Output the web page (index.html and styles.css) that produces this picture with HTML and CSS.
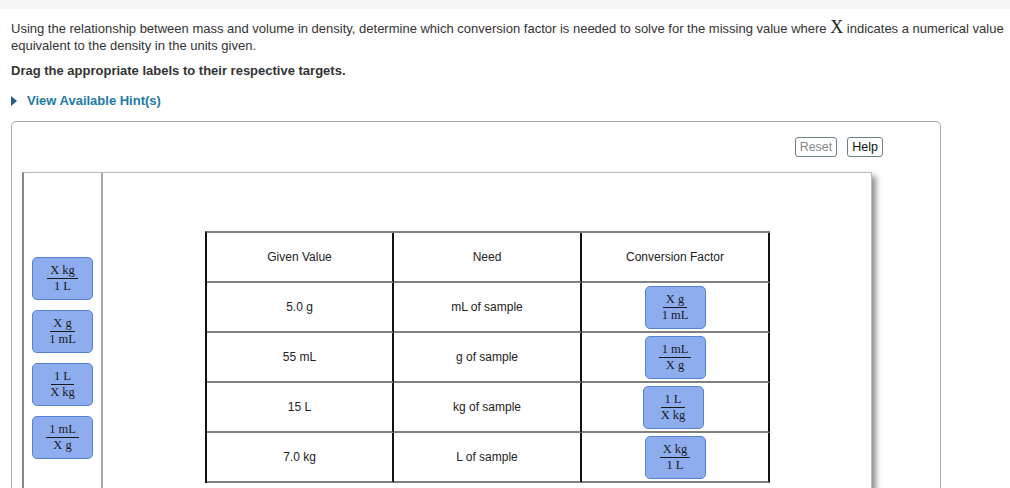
FILE: index.html
```html
<!DOCTYPE html>
<html lang="en">
<head>
    <meta charset="UTF-8">
    <meta name="viewport" content="width=device-width, initial-scale=1.0">
    <title>Density conversion factors</title>
    <link rel="stylesheet" href="styles.css">
</head>
<body>

<div class="topbar"></div>

<div class="content">
    <p class="intro">Using the relationship between mass and volume in density, determine which conversion factor is needed to solve for the missing value where <span class="math">X</span> indicates a numerical value<br>equivalent to the density in the units given.</p>
    <p class="instr">Drag the appropriate labels to their respective targets.</p>
    <div class="hint"><span class="arrow"></span>View Available Hint(s)</div>

    <div class="panel">
        <div class="toolbar">
            <button class="btn btn-off">Reset</button>
            <button class="btn">Help</button>
        </div>

        <div class="canvas">
            <!-- Labels that can be dragged -->
            <div class="labels">
                <div class="label"><span class="num">X kg</span><span class="den">1 L</span></div>
                <div class="label"><span class="num">X g</span><span class="den">1 mL</span></div>
                <div class="label"><span class="num">1 L</span><span class="den">X kg</span></div>
                <div class="label"><span class="num">1 mL</span><span class="den">X g</span></div>
            </div>

            <!-- Target table -->
            <div class="board">
                <table class="grid">
                    <tr>
                        <td>Given Value</td>
                        <td>Need</td>
                        <td>Conversion Factor</td>
                    </tr>
                    <tr>
                        <td>5.0 g</td>
                        <td>mL of sample</td>
                        <td><div class="label"><span class="num">X g</span><span class="den">1 mL</span></div></td>
                    </tr>
                    <tr>
                        <td>55 mL</td>
                        <td>g of sample</td>
                        <td><div class="label"><span class="num">1 mL</span><span class="den">X g</span></div></td>
                    </tr>
                    <tr>
                        <td>15 L</td>
                        <td>kg of sample</td>
                        <td><div class="label shift"><span class="num">1 L</span><span class="den">X kg</span></div></td>
                    </tr>
                    <tr>
                        <td>7.0 kg</td>
                        <td>L of sample</td>
                        <td><div class="label"><span class="num">X kg</span><span class="den">1 L</span></div></td>
                    </tr>
                </table>
            </div>
        </div>
    </div>
</div>

</body>
</html>
```

FILE: styles.css
```css
body {
    font-family: "Liberation Sans", Arial, sans-serif;
    color: #333;
    background: white;
    margin: 0;
    overflow: hidden;
}
.topbar {
    height: 9px;
    background-color: #f6f6f6;
}
.content {
    padding: 0 0 0 11px;
}
.intro {
    font-size: 13px;
    line-height: 17px;
    margin: 11px 0 0 0;
    white-space: nowrap;
}
.math {
    font-family: "Liberation Serif", "Times New Roman", serif;
    font-size: 18px;
    line-height: 10px;
    color: #222;
}
.instr {
    font-size: 13px;
    line-height: 17px;
    font-weight: bold;
    margin: 8px 0 0 0;
}
.hint {
    display: flex;
    align-items: center;
    font-size: 13px;
    line-height: 17px;
    font-weight: bold;
    color: #1e7aa6;
    margin-top: 13px;
}
.arrow {
    width: 0;
    height: 0;
    border-top: 5px solid transparent;
    border-bottom: 5px solid transparent;
    border-left: 6px solid #1f5f86;
    margin-right: 10px;
}
.panel {
    width: 918px;
    height: 400px;
    margin-top: 12px;
    padding: 15px 0 0 10px;
    border: 1px solid #aaa;
    border-radius: 5px;
}
.toolbar {
    width: 861px;
    display: flex;
    justify-content: flex-end;
    gap: 10px;
}
.btn {
    font-family: "Liberation Sans", Arial, sans-serif;
    font-size: 12.5px;
    height: 20px;
    padding: 0 4px;
    background: white;
    color: #111;
    border: 1px solid #6f7f86;
    border-radius: 3px;
}
.btn-off {
    color: #888;
}
.canvas {
    display: flex;
    width: 847px;
    height: 360px;
    margin-top: 15px;
    border: 1px solid #bbb;
    border-left: 2px solid #888;
    box-shadow: 4px 4px 6px rgba(0, 0, 0, 0.45);
}
.labels {
    width: 77px;
    border-right: 2px solid #aaa;
    display: flex;
    flex-direction: column;
    align-items: center;
    gap: 10px;
    padding-top: 84px;
}
.label {
    box-sizing: border-box;
    width: 61px;
    height: 43px;
    background-color: #8eadef;
    border: 1px solid #5582d2;
    border-radius: 5px;
    display: flex;
    flex-direction: column;
    align-items: center;
    justify-content: center;
    font-family: "Liberation Serif", "Times New Roman", serif;
    font-size: 12.5px;
    line-height: 13px;
    color: #1a1a1a;
}
.num {
    border-bottom: 1px solid #1a1a1a;
    padding: 0 3px 1px;
}
.den {
    padding-top: 1px;
}
.board {
    padding: 58px 0 0 102px;
}
.grid {
    border-collapse: separate;
    border-spacing: 0;
    border-top: 2px solid #808080;
    border-left: 2px solid #111;
}
.grid td {
    width: 186px;
    height: 48px;
    padding: 0;
    text-align: center;
    vertical-align: middle;
    font-size: 12px;
    color: #222;
    border-right: 2px solid #111;
    border-bottom: 2px solid #808080;
}
.grid td:first-child {
    width: 185px;
}
.grid .label {
    margin: 0 auto;
}
.grid .shift {
    position: relative;
    left: -2px;
}
```
